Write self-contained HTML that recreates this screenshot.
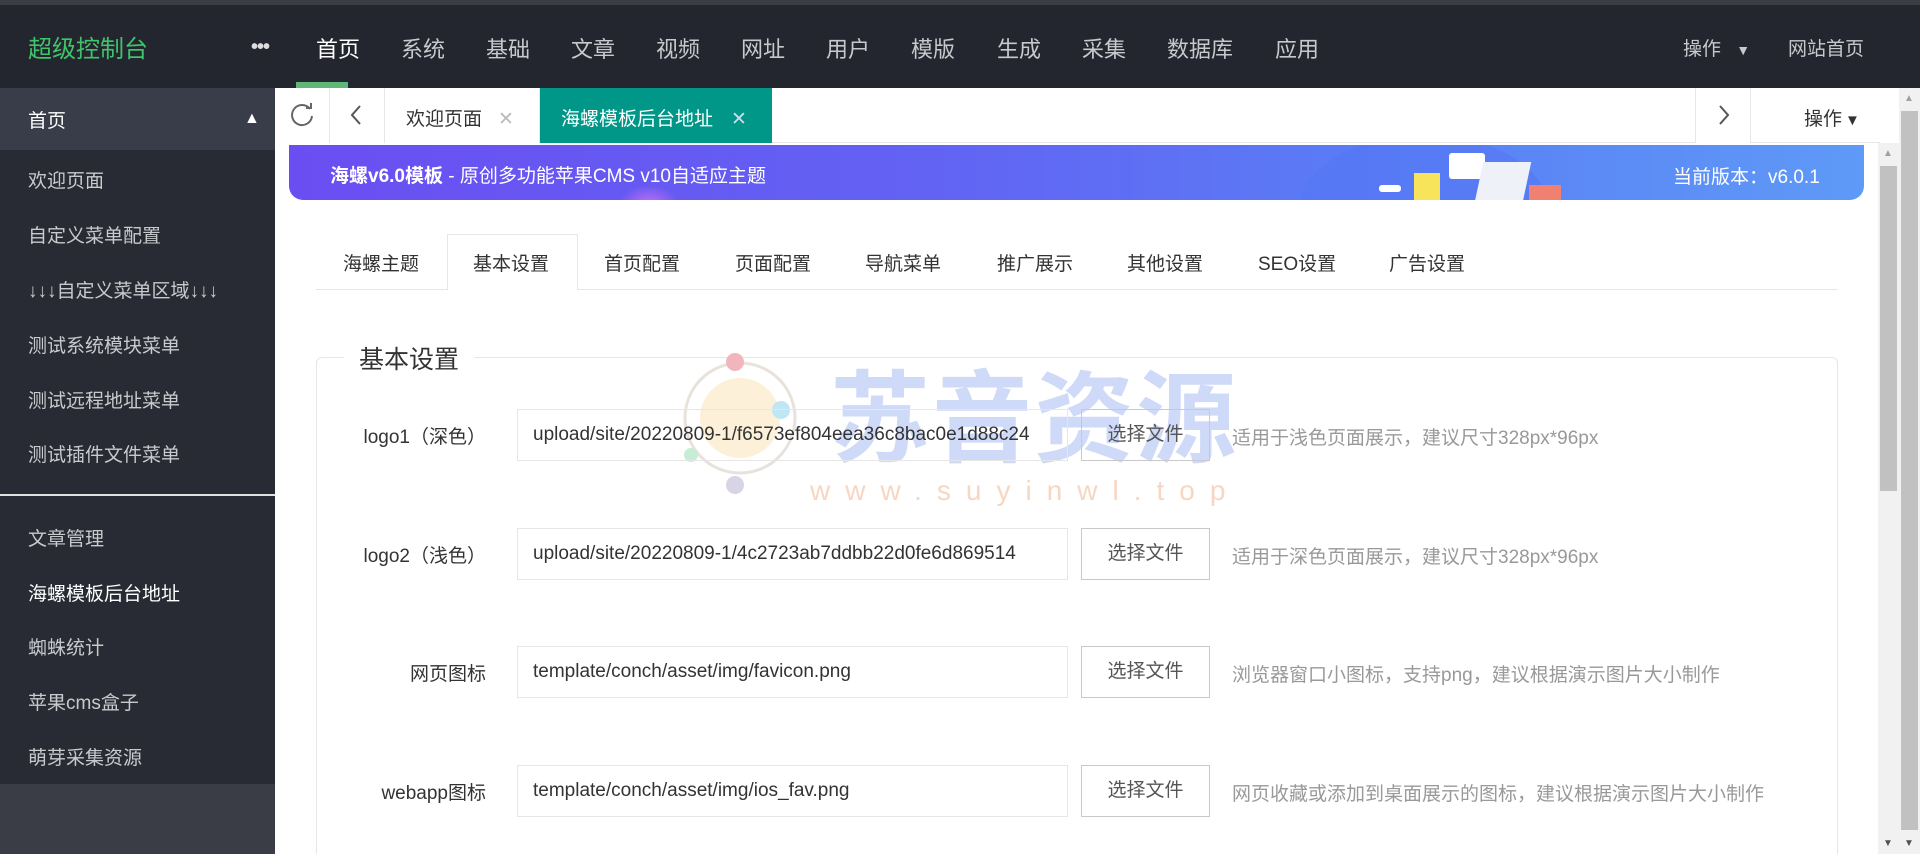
<!DOCTYPE html>
<html style="width:1920px;height:854px;overflow:hidden"><head><meta charset="utf-8"><style>
*{margin:0;padding:0;box-sizing:border-box}
body{width:1920px;height:854px;overflow:hidden;background:#fff;font-family:"Liberation Sans","Noto Sans CJK SC",sans-serif;position:relative}
.abs{position:absolute}
#top{left:0;top:0;width:1920px;height:88px;background:#23262e;border-top:5px solid #3a3d44}
#top .logo{left:28px;top:24px;color:#3fc46a;font-size:24px}
#top .nav{top:27px;color:#c8c9cc;font-size:22px}
#side{left:0;top:88px;width:275px;height:766px;background:#3a3d46}
#side .inner{left:0;top:0;width:275px;height:696px;background:#282b33}
.si{left:28px;font-size:19px;color:#c9cacd}
.cell{top:88px;height:55px;border-right:1px solid #e6e6e6;background:#fff}
.field{left:517px;width:551px;height:52px;border:1px solid #e6e6e6;font-size:19px;color:#333;padding:0 15px;line-height:50px;white-space:nowrap;overflow:hidden;background:#fff}
.btn{left:1081px;width:129px;height:52px;border:1px solid #c9c9c9;font-size:19px;color:#555;text-align:center;line-height:50px;background:#fff}
.lab{width:190px;left:296px;text-align:right;font-size:19px;color:#333}
.hint{left:1232px;font-size:19px;color:#999}
.tab{top:249px;font-size:19px;color:#333}
</style></head><body>
<div id="top" class="abs">
<div class="abs logo">超级控制台</div>
<div class="abs" style="left:251px;top:31px;color:#ddd;font-size:20px;font-weight:bold;letter-spacing:-1px">•••</div>
<div class="abs nav" style="left:316px;color:#fff">首页</div>
<div class="abs nav" style="left:401px">系统</div>
<div class="abs nav" style="left:486px">基础</div>
<div class="abs nav" style="left:571px">文章</div>
<div class="abs nav" style="left:656px">视频</div>
<div class="abs nav" style="left:741px">网址</div>
<div class="abs nav" style="left:826px">用户</div>
<div class="abs nav" style="left:911px">模版</div>
<div class="abs nav" style="left:997px">生成</div>
<div class="abs nav" style="left:1082px">采集</div>
<div class="abs nav" style="left:1167px">数据库</div>
<div class="abs nav" style="left:1275px">应用</div>
<div class="abs" style="left:296px;top:77px;width:52px;height:6px;background:#5fb878"></div>
<div class="abs" style="left:1683px;top:29px;color:#c8c9cc;font-size:19px">操作 <span style="font-size:14px;margin-left:10px">▼</span></div>
<div class="abs" style="left:1788px;top:29px;color:#c8c9cc;font-size:19px">网站首页</div>
</div>
<div id="side" class="abs"><div class="abs inner">
<div class="abs" style="left:0;top:0;width:275px;height:62px;background:#393d49"></div>
<div class="abs si" style="top:18px;color:#fff">首页</div>
<div class="abs" style="left:244px;top:22px;color:#fff;font-size:16px">▲</div>
<div class="abs si" style="top:78px">欢迎页面</div>
<div class="abs si" style="top:133px">自定义菜单配置</div>
<div class="abs si" style="top:188px">↓↓↓自定义菜单区域↓↓↓</div>
<div class="abs si" style="top:243px">测试系统模块菜单</div>
<div class="abs si" style="top:298px">测试远程地址菜单</div>
<div class="abs si" style="top:352px">测试插件文件菜单</div>
<div class="abs" style="left:0;top:406px;width:275px;height:2px;background:#e0e0e0"></div>
<div class="abs si" style="top:436px">文章管理</div>
<div class="abs si" style="top:491px;color:#fff">海螺模板后台地址</div>
<div class="abs si" style="top:545px">蜘蛛统计</div>
<div class="abs si" style="top:600px">苹果cms盒子</div>
<div class="abs si" style="top:655px">萌芽采集资源</div>
</div></div>
<!-- tab bar -->
<div class="abs" style="left:275px;top:142px;width:1605px;height:1px;background:#e6e6e6"></div>
<div class="abs cell" style="left:275px;width:55px"><svg width="55" height="55"><path d="M35 21 A10 10 0 1 0 37 28" fill="none" stroke="#666" stroke-width="2"/><path d="M31 20 L36 20 L36 15" fill="none" stroke="#666" stroke-width="2"/></svg></div>
<div class="abs cell" style="left:330px;width:55px"><svg width="55" height="55"><path d="M30 18 L22 27 L30 36" fill="none" stroke="#555" stroke-width="2"/></svg></div>
<div class="abs cell" style="left:385px;width:155px;font-size:19px;color:#333;padding:16px 0 0 21px">欢迎页面<span style="color:#bbb;margin-left:16px">✕</span></div>
<div class="abs" style="left:540px;top:88px;width:232px;height:55px;background:#009688;font-size:19px;color:#fff;padding:16px 0 0 21px">海螺模板后台地址<span style="color:#cde;margin-left:18px">✕</span></div>
<div class="abs cell" style="left:1695px;width:56px;border-left:1px solid #e6e6e6"><svg width="56" height="55"><path d="M24 18 L32 27 L24 36" fill="none" stroke="#555" stroke-width="2"/></svg></div>
<div class="abs" style="left:1804px;top:104px;font-size:19px;color:#333">操作<span style="font-size:15px;margin-left:3px">▼</span></div>
<!-- banner -->
<div class="abs" style="left:289px;top:145px;width:1575px;height:55px;border-radius:0 0 14px 14px;background:linear-gradient(90deg,#6b4ef2 0%,#6262f3 40%,#5a7ef5 70%,#5e9af7 100%);overflow:hidden">
<div class="abs" style="left:330px;top:40px;width:60px;height:40px;border-radius:50%;background:radial-gradient(#c66ff0,transparent 70%)"></div>
<div class="abs" style="left:1010px;top:-10px;width:250px;height:150px;border-radius:50%;background:#5577f5;opacity:.6"></div>
<div class="abs" style="left:1090px;top:40px;width:22px;height:7px;background:#fff;border-radius:3px"></div>
<div class="abs" style="left:1125px;top:28px;width:26px;height:27px;background:#f7e45a"></div>
<div class="abs" style="left:1160px;top:8px;width:36px;height:26px;background:#fff;border-radius:3px"></div>
<div class="abs" style="left:1190px;top:17px;width:48px;height:40px;background:#eef1f8;transform:skewX(-12deg)"></div>
<div class="abs" style="left:1240px;top:40px;width:32px;height:15px;background:#f08070"></div>
<div class="abs" style="left:41px;top:16px;color:#fff;font-size:19px"><b>海螺v6.0模板</b> - 原创多功能苹果CMS v10自适应主题</div>
<div class="abs" style="left:1384px;top:17px;color:#fff;font-size:19px">当前版本：v6.0.1</div>
</div>
<!-- sub tabs -->
<div class="abs" style="left:316px;top:289px;width:1522px;height:1px;background:#e6e6e6"></div>
<div class="abs" style="left:447px;top:234px;width:131px;height:56px;border:1px solid #e6e6e6;border-bottom:none;background:#fff"></div>
<div class="abs tab" style="left:343px">海螺主题</div>
<div class="abs tab" style="left:473px">基本设置</div>
<div class="abs tab" style="left:604px">首页配置</div>
<div class="abs tab" style="left:735px">页面配置</div>
<div class="abs tab" style="left:865px">导航菜单</div>
<div class="abs tab" style="left:997px">推广展示</div>
<div class="abs tab" style="left:1127px">其他设置</div>
<div class="abs tab" style="left:1258px">SEO设置</div>
<div class="abs tab" style="left:1389px">广告设置</div>
<!-- fieldset -->
<div class="abs" style="left:316px;top:357px;width:1522px;height:520px;border:1px solid #e6e6e6;border-radius:6px"></div>
<div class="abs" style="left:344px;top:340px;padding:0 15px;background:#fff;font-size:25px;color:#333">基本设置</div>
<!-- watermark -->
<svg class="abs" style="left:675px;top:350px" width="130" height="150"><circle cx="65" cy="68" r="55" fill="none" stroke="#e8e2dc" stroke-width="3"/><circle cx="65" cy="68" r="40" fill="#fbe6c0" opacity=".6"/><circle cx="60" cy="12" r="9" fill="#f2b5bb"/><circle cx="106" cy="60" r="9" fill="#bfe6f4"/><circle cx="60" cy="135" r="9" fill="#d8d4e6"/><circle cx="16" cy="105" r="7" fill="#c7ecd7"/></svg>
<div class="abs" style="left:830px;top:365px;font-size:100px;line-height:110px;font-weight:bold;color:#c9d6f7;letter-spacing:2px;opacity:.9">苏音资源</div>
<div class="abs" style="left:810px;top:475px;font-size:28px;color:#f7d6c2;letter-spacing:15px">www.suyinwl.top</div>
<!-- rows -->
<div class="abs lab" style="top:422px">logo1（深色）</div>
<div class="abs field" style="top:409px;background:transparent">upload/site/20220809-1/f6573ef804eea36c8bac0e1d88c24</div>
<div class="abs btn" style="top:409px;background:transparent">选择文件</div>
<div class="abs hint" style="top:423px">适用于浅色页面展示，建议尺寸328px*96px</div>
<div class="abs lab" style="top:541px">logo2（浅色）</div>
<div class="abs field" style="top:528px">upload/site/20220809-1/4c2723ab7ddbb22d0fe6d869514</div>
<div class="abs btn" style="top:528px">选择文件</div>
<div class="abs hint" style="top:542px">适用于深色页面展示，建议尺寸328px*96px</div>
<div class="abs lab" style="top:659px">网页图标</div>
<div class="abs field" style="top:646px">template/conch/asset/img/favicon.png</div>
<div class="abs btn" style="top:646px">选择文件</div>
<div class="abs hint" style="top:660px">浏览器窗口小图标，支持png，建议根据演示图片大小制作</div>
<div class="abs lab" style="top:778px">webapp图标</div>
<div class="abs field" style="top:765px">template/conch/asset/img/ios_fav.png</div>
<div class="abs btn" style="top:765px">选择文件</div>
<div class="abs hint" style="top:779px">网页收藏或添加到桌面展示的图标，建议根据演示图片大小制作</div>
<!-- scrollbars -->
<div class="abs" style="left:1878px;top:143px;width:21px;height:711px;background:#f1f1f1"></div>
<div class="abs" style="left:1880px;top:166px;width:17px;height:325px;background:#c1c1c1"></div>
<div class="abs" style="left:1883px;top:148px;font-size:10px;color:#a0a0a0">▲</div>
<div class="abs" style="left:1883px;top:838px;font-size:10px;color:#505050">▼</div>
<div class="abs" style="left:1899px;top:88px;width:21px;height:766px;background:#f1f1f1"></div>
<div class="abs" style="left:1901px;top:111px;width:17px;height:719px;background:#c1c1c1"></div>
<div class="abs" style="left:1904px;top:93px;font-size:10px;color:#a0a0a0">▲</div>
<div class="abs" style="left:1904px;top:838px;font-size:10px;color:#505050">▼</div>
</body></html>
